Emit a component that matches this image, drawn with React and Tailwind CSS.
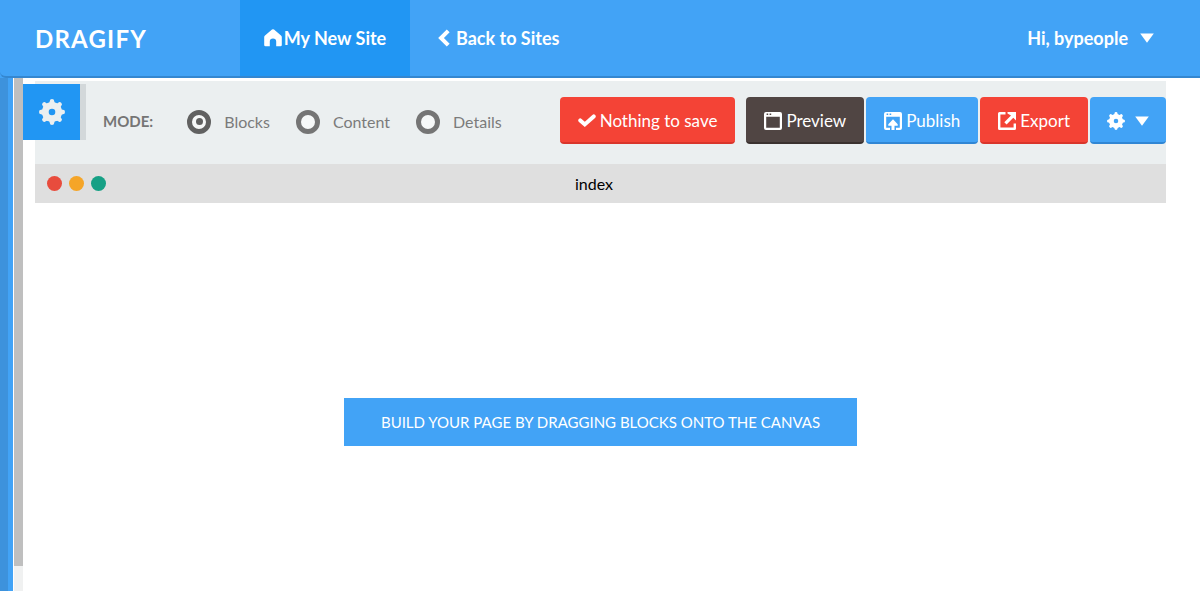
import React from "react";

function HomeIcon() {
  return (
    <svg viewBox="0 0 18 18" className="size-[18px] shrink-0" fill="currentColor" aria-hidden="true">
      <path d="M8 .6q1-.8 2 0L17 6.400q.8.700.8 1.700v7.800q0 1.400-1.400 1.400h-4.200v-4.700a3.200 3.200 0 0 0-6.400 0v4.700H1.600Q.2 17.300.2 15.900V8.100q0-1 .8-1.700Z" />
    </svg>
  );
}

function ChevronIcon() {
  return (
    <svg viewBox="0 0 12 18" className="h-[18px] w-3 shrink-0" fill="none" stroke="currentColor" strokeWidth="4" aria-hidden="true">
      <path d="M10.200 1.800 3 9l7.200 7.200" />
    </svg>
  );
}

function CaretIcon() {
  return (
    <svg viewBox="0 0 14 10" className="h-[10px] w-[14px] shrink-0" fill="currentColor" aria-hidden="true">
      <path d="M.2.500h13.600L7 9.800Z" />
    </svg>
  );
}

function CheckIcon() {
  return (
    <svg
      viewBox="0 0 18 18"
      className="size-[18px] shrink-0"
      fill="none"
      stroke="currentColor"
      strokeWidth="4"
      strokeLinecap="round"
      aria-hidden="true"
    >
      <path d="M2.300 8.400 6.800 12.400 15.700 4.400" />
    </svg>
  );
}

function GearIcon({ className }) {
  const teeth = [0, 45, 90, 135, 180, 225, 270, 315];
  return (
    <svg viewBox="0 0 26 26" className={className} aria-hidden="true">
      <circle cx="13" cy="13" r="6.700" fill="none" stroke="currentColor" strokeWidth="6.800" />
      {teeth.map((angle) => (
        <path
          key={angle}
          d="M9.300 4.800Q10.800 3.600 10.800 2 10.800 0 13 0T15.200 2Q15.200 3.600 16.700 4.800Z"
          fill="currentColor"
          transform={`rotate(${angle} 13 13)`}
        />
      ))}
    </svg>
  );
}

function WindowIcon() {
  return (
    <svg viewBox="0 0 18 18" className="size-[18px] shrink-0" fill="currentColor" aria-hidden="true">
      <path fillRule="evenodd" d="M2 0h14q2 0 2 2v14q0 2-2 2H2q-2 0-2-2V2Q0 0 2 0ZM2.200 4.700v11h13.600v-11ZM2.600 1.400v1.600h1.600V1.400ZM5.600 1.400v1.600h1.600V1.400Z" />
    </svg>
  );
}

function UploadWindowIcon() {
  return (
    <svg viewBox="0 0 18 18" className="size-[18px] shrink-0" fill="currentColor" aria-hidden="true">
      <path fillRule="evenodd" d="M2 0h14q2 0 2 2v14q0 2-2 2h-4v-2.300h3.800v-11H2.200v11H6V18H2q-2 0-2-2V2Q0 0 2 0ZM2.600 1.400v1.600h1.600V1.400ZM5.600 1.400v1.600h1.600V1.400Z" />
      <path d="M9 7.300 13.700 12.300v1.400h-3.200V18h-3v-4.300H4.300v-1.400Z" />
    </svg>
  );
}

function ExportIcon() {
  return (
    <svg viewBox="0 0 18 18" className="size-[18px] shrink-0" fill="currentColor" aria-hidden="true">
      <path d="M1.500 0H7.500v2.400H2.400v13.200h13.200V11.500H18v5q0 1.500-1.500 1.500h-15Q0 18 0 16.500v-15Q0 0 1.500 0Z" />
      <path d="M9.500 0H18v8.500l-2.700-2.700L8.600 12.500 6.300 10.200 13 3.500 9.500 1.500Z" />
    </svg>
  );
}

const buttonBase =
  "flex h-[47px] cursor-pointer items-center gap-1 rounded-[4px] border-b-2 pt-0.5 text-[17px] leading-6 whitespace-nowrap text-white";

function ToolbarButton({ className, children, ...rest }) {
  return (
    <button type="button" className={`${buttonBase} ${className}`} {...rest}>
      {children}
    </button>
  );
}

function ModeOption({ label, defaultChecked }) {
  return (
    <label className="flex cursor-pointer items-center gap-[13px] text-base text-[#7b7b7b]">
      <input
        type="radio"
        name="mode"
        value={label}
        defaultChecked={defaultChecked}
        className="grid size-6 shrink-0 appearance-none place-items-center rounded-full border-5 border-[#757575] bg-[#f6f8f8] checked:border-[#616161] checked:before:size-[7px] checked:before:rounded-full checked:before:bg-[#616161]"
      />
      {label}
    </label>
  );
}

export default function App() {
  return (
    <div className="flex min-h-screen flex-col bg-white font-['Lato',sans-serif]">
      <div className="bg-[#42a3f6]">
        <header className="flex h-[78px] items-stretch rounded-bl-[6px] border-b-2 border-[#3487d0] bg-[#42a3f6] text-white">
          <a href="#home" className="flex w-60 shrink-0 items-center pl-[35px] pt-0.5 text-2xl font-bold tracking-wider">
            DRAGIFY
          </a>
          <nav className="flex text-lg font-bold">
            <a href="#site" className="flex w-[170px] items-center justify-center gap-[2px] bg-[#2196f3]">
              <HomeIcon />
              My New Site
            </a>
            <a href="#sites" className="flex items-center gap-[6px] px-7">
              <ChevronIcon />
              Back to Sites
            </a>
          </nav>
          <button type="button" className="ml-auto flex cursor-pointer items-center gap-3 pr-[46px] text-lg font-bold">
            Hi, bypeople
            <CaretIcon />
          </button>
        </header>
      </div>

      <div className="flex grow items-stretch">
        <aside className="w-[13px] shrink-0 border-r-5 border-[#42a3f6] bg-[#3d92dc]" />
        <div className="flex w-[10px] shrink-0 flex-col border-l border-white bg-[#f0f1f1]">
          <div className="h-[488px] bg-[#bfbfbf]" />
        </div>

        <main className="grow pt-[3px] pr-[34px] pl-3">
          <div className="relative flex h-[83px] items-center justify-between bg-[#ebeff0] pb-1 pl-[68px]">
            <button
              type="button"
              aria-label="Settings"
              className="absolute top-[3px] -left-3 flex h-14 w-[63px] cursor-pointer items-center justify-center border-r-6 border-[#d3d8da] bg-[#2196f3] text-[#ebeff0]"
            >
              <GearIcon className="size-[26px]" />
            </button>
            <div role="radiogroup" aria-labelledby="mode-label" className="flex items-center pt-0.5">
              <span id="mode-label" className="mr-[34px] text-[15px] font-bold text-[#757575]">
                MODE:
              </span>
              <div className="flex gap-[26px]">
                <ModeOption label="Blocks" defaultChecked />
                <ModeOption label="Content" />
                <ModeOption label="Details" />
              </div>
            </div>
            <div className="flex gap-[2px]">
              <ToolbarButton className="mr-[9px] border-[#d9352b] bg-[#f44336] px-[18px]">
                <CheckIcon />
                Nothing to save
              </ToolbarButton>
              <ToolbarButton className="border-[#3a312f] bg-[#504543] px-[18px]">
                <WindowIcon />
                Preview
              </ToolbarButton>
              <ToolbarButton className="border-[#3086d4] bg-[#42a3f6] px-[18px]">
                <UploadWindowIcon />
                Publish
              </ToolbarButton>
              <ToolbarButton className="border-[#d9352b] bg-[#f44336] px-[18px]">
                <ExportIcon />
                Export
              </ToolbarButton>
              <ToolbarButton className="border-[#3086d4] bg-[#42a3f6] px-[17px]" aria-label="Page options">
                <GearIcon className="mr-1.5 size-[18px]" />
                <CaretIcon />
              </ToolbarButton>
            </div>
          </div>

          <div className="flex h-[39px] items-center bg-[#dfdfdf] px-3">
            <div className="flex w-[59px] gap-[7px]">
              <span className="size-[15px] rounded-full bg-[#e84c3d]" />
              <span className="size-[15px] rounded-full bg-[#f5a528]" />
              <span className="size-[15px] rounded-full bg-[#16a085]" />
            </div>
            <h1 className="grow pr-[72px] text-center text-base text-black">index</h1>
          </div>

          <section className="flex justify-center pt-[195px]">
            <p className="bg-[#42a3f6] px-[37px] py-3 text-[15px] leading-6 text-white">
              BUILD YOUR PAGE BY DRAGGING BLOCKS ONTO THE CANVAS
            </p>
          </section>
        </main>
      </div>
    </div>
  );
}
